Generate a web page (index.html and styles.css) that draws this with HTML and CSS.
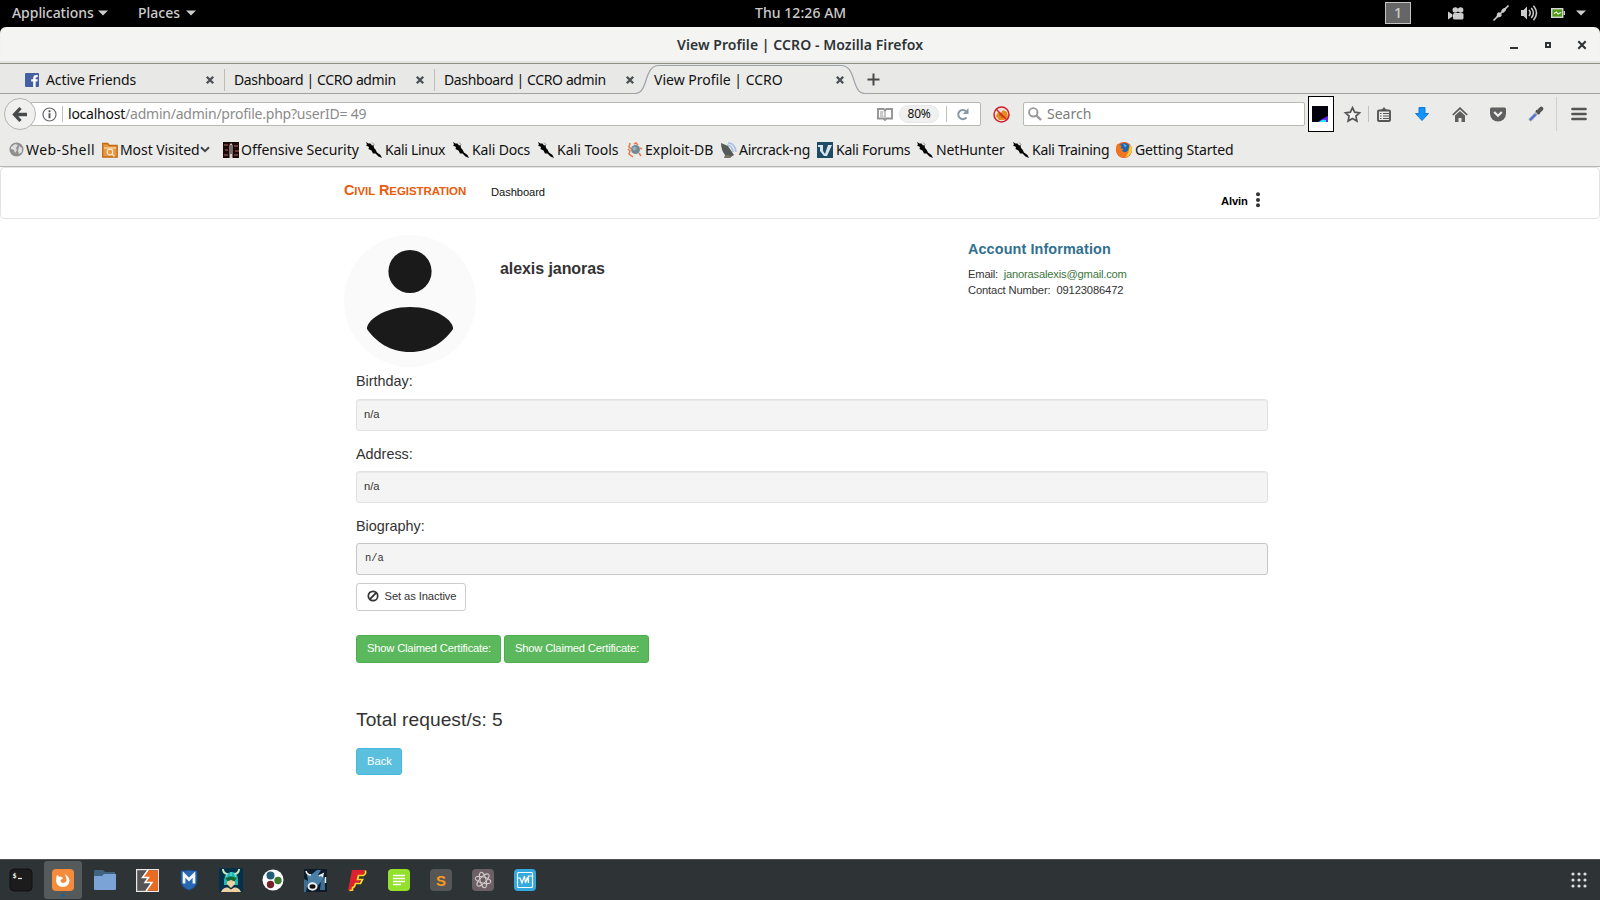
FILE: index.html
```html
<!DOCTYPE html>
<html lang="en">
<head>
<meta charset="utf-8">
<title>View Profile | CCRO</title>
<link rel="stylesheet" href="styles.css">
</head>
<body>
<svg class="defs" width="0" height="0">
  <symbol id="dragon" viewBox="0 0 16 16"><path d="M0 0l2.500 1.500 2 0 1.500 2 1.500-.5.5 3 1.500 1.500 1.500 3 3.500 2.500 1.500 3-3.500-1.500-3-3-2.500 0-1.500-3-3-1.500.5-2-3-1.500 1-1z" fill="#050505"/><path d="M6 .5l2.500 2.500" stroke="#555" stroke-width=".6"/></symbol>
  <symbol id="x" viewBox="0 0 10 10"><path d="M1.8 1.8l6.4 6.4M8.2 1.8l-6.4 6.4" stroke="#4a5053" stroke-width="2.3"/></symbol>
  <symbol id="down" viewBox="0 0 10 6"><path d="M0 .5h10l-5 5z" fill="#ccc"/></symbol>
</svg>

<header class="panel">
  <span class="menu apps">Applications</span><svg width="10" height="6"><use href="#down"/></svg>
  <span class="menu places">Places</span><svg width="10" height="6"><use href="#down"/></svg>
  <span class="clock">Thu 12:26 AM</span>
  <span class="workspace">1</span>
  <div class="tray">
    <svg width="16" height="13" viewBox="0 0 16 13"><g fill="#ccc"><circle cx="7.3" cy="3" r="2.8"/><circle cx="12.6" cy="3" r="2.8"/><rect x="5" y="6" width="10.5" height="6.5" rx="1.5"/><path d="M0 4.5l4.5 3v2L0 12.5z"/></g></svg>
    <svg width="16" height="16" viewBox="0 0 16 16"><path d="M.5 15.500L15.500.5" stroke="#ccc" stroke-width="1.700"/><path d="M3.500 12.500l.5-4 2-1.500 3 3-1.500 2zM8 6l2-2.500 3.500-1-1 3.500-2.500 2z" fill="#ccc"/></svg>
    <svg width="17" height="16" viewBox="0 0 17 16"><path d="M0 5h2.500l3.500-3.500v13L2.500 11H0z" fill="#ccc"/><path d="M8 5q2.500 3 0 6M10.300 3q4.200 5 0 10M12.500.8q6 7.200 0 14.400" fill="none" stroke="#ccc" stroke-width="1.500"/></svg>
    <svg class="battery" width="14" height="10" viewBox="0 0 14 10"><rect x=".7" y=".7" width="11" height="8.600" fill="#4f9a18" stroke="#d5d5d5" stroke-width="1.400"/><path d="M12.500 3v4h1.500v-4z" fill="#ccc"/><path d="M3 5.500l2.500-1.500 1.500 2 3-1.500" stroke="#e8f5dc" fill="none" stroke-width="1.200"/></svg>
    <svg width="10" height="6"><use href="#down"/></svg>
  </div>
</header>

<div class="titlebar">
  <span class="win-title">View Profile | CCRO - Mozilla Firefox</span>
  <div class="controls">
    <svg width="10" height="10"><path d="M1 8h8" stroke="#2e3436" stroke-width="2"/></svg>
    <svg width="8" height="8"><rect x="2" y="2" width="4" height="4" fill="none" stroke="#2e3436" stroke-width="2"/></svg>
    <svg width="10" height="10"><path d="M1.300 1.300l7.400 7.400M8.700 1.300l-7.400 7.400" stroke="#2e3436" stroke-width="2.100"/></svg>
  </div>
</div>

<div class="tabs">
  <div class="tab first">
    <svg class="fav" width="14" height="14"><rect width="14" height="14" rx="1" fill="#4460a0"/><path d="M8.200 14V8.500H6.200V6.300h2V5q0-3 3-3h1.500v2.200h-1.200q-.9 0-.9 1v1.100h2.100l-.3 2.200h-1.800V14z" fill="#fff"/></svg>
    <span>Active Friends</span><svg width="10" height="10"><use href="#x"/></svg>
  </div>
  <div class="tab dashboard"><span>Dashboard | CCRO admin</span><svg width="10" height="10"><use href="#x"/></svg></div>
  <div class="tab dashboard last"><span>Dashboard | CCRO admin</span><svg width="10" height="10"><use href="#x"/></svg></div>
  <div class="tab active">
    <svg class="tab-shape" width="236" height="31" viewBox="0 0 236 31"><path d="M0 29.500C14 29.500 8 1.500 24 1.500H206C222 1.500 216 29.500 230 29.500H236V31H0z" fill="#ebebe9"/><path d="M0 29.500C14 29.500 8 1.500 24 1.500H206C222 1.500 216 29.500 230 29.500H236" fill="none" stroke="#9da3a8" stroke-width="1.200"/></svg>
    <span>View Profile | CCRO</span><svg width="10" height="10"><use href="#x"/></svg>
  </div>
  <svg class="plus" width="13" height="13"><path d="M6.500.5v12M.5 6.500h12" stroke="#484848" stroke-width="2"/></svg>
</div>

<div class="nav">
  <div class="back"><svg width="14" height="15" viewBox="0 0 14 15"><path d="M7.500 1L1.500 7.500l6 6.500M2 7.500h12" fill="none" stroke="#484b4c" stroke-width="3.300"/></svg></div>
  <div class="url">
    <svg width="15" height="15"><circle cx="7.500" cy="7.500" r="6.500" fill="none" stroke="#666" stroke-width="1.200"/><path d="M7.500 6.300v5M7.500 3.300v2" stroke="#555" stroke-width="1.900"/></svg>
    <i class="bar"></i>
    <span class="address">localhost<em>/admin/admin/profile.php?userID= 49</em></span>
    <svg class="reader" width="16" height="13" viewBox="0 0 16 13"><path d="M1 1h5.500L8 2.300 9.500 1H15v9.500H9.500L8 12l-1.500-1.500H1z" fill="none" stroke="#949494" stroke-width="1.900"/><path d="M8 2v10M3 4h3.500M3 6h3M3 8h3.500" stroke="#949494" stroke-width="1.100"/></svg>
    <span class="zoom">80%</span>
    <i class="bar"></i>
    <svg class="reload" width="12" height="13" viewBox="0 0 12 13"><path d="M9.500 9.300A4.600 4.600 0 1 1 9 3.200" fill="none" stroke="#8898a6" stroke-width="2"/><path d="M11.500 0v6H5.800z" fill="#8898a6"/></svg>
  </div>
  <svg class="noscript" width="17" height="17" viewBox="0 0 17 17"><circle cx="8.500" cy="8.500" r="7.500" fill="#eee6dc"/><path d="M3 10l2-4 3 1 2-3 4 2 1 5-4 3-5 0z" fill="#e88a1d"/><path d="M6 9h3v3" stroke="#8d4a09" fill="none"/><circle cx="8.500" cy="8.500" r="7.500" fill="none" stroke="#d3202a" stroke-width="1.500"/><path d="M3 3l11 11" stroke="#d3202a" stroke-width="1.400"/></svg>
  <div class="search"><svg width="14" height="14"><circle cx="5.300" cy="5.300" r="4.200" fill="none" stroke="#999" stroke-width="1.900"/><path d="M8.300 8.300l4.700 4.700" stroke="#999" stroke-width="2.400"/></svg><span>Search</span></div>
  <div class="persona"><svg width="16" height="16"><rect width="16" height="16" fill="#03020d"/><path d="M16 10v6H6l4-3z" fill="#6527ef"/><path d="M7 16q3-3 7-2v2z" fill="#20edf1"/></svg></div>
  <div class="tools">
    <svg class="star" width="17" height="17" viewBox="0 0 17 17"><path d="M8.500 1.700l2.100 4.500 4.900.6-3.600 3.300 1 4.900-4.400-2.500L4.100 15l1-4.900L1.500 6.800l4.900-.6z" fill="#f6f6f6" stroke="#555" stroke-width="1.700"/></svg>
    <i class="bar"></i>
    <svg width="14" height="15" viewBox="0 0 14 15"><rect x="1" y="3.500" width="12" height="10.500" rx="1" fill="none" stroke="#555" stroke-width="1.900"/><path d="M3.500 3l2-1 1.500-2 1.500 2 2 1z" fill="#555"/><path d="M3 6.500h1.500M6 6.500h6M3 9h1.500M6 9h6M3 11.500h1.500M6 11.500h6" stroke="#555" stroke-width="1.200"/></svg>
    <svg width="14" height="14" viewBox="0 0 14 14"><path d="M4 .5h6v6h3.500L7 13.500.5 6.500H4z" fill="#1693fb" stroke="#1278d4"/></svg>
    <svg width="16" height="15" viewBox="0 0 16 15"><path d="M.8 8L8 1.200 15.200 8" fill="none" stroke="#555" stroke-width="1.700"/><path d="M3 8.500L8 4l5 4.500V15H9.500v-4h-3v4H3z" fill="#606060"/></svg>
    <svg width="16" height="15" viewBox="0 0 16 15"><path d="M1.500.5h13q1.500 0 1.500 1.500v4.500a8 8 0 0 1-16 0V2Q0 .5 1.500.5z" fill="#5f5f5f"/><path d="M4.200 5l3.800 3.700L11.800 5" fill="none" stroke="#eee" stroke-width="2.200"/></svg>
    <svg width="16" height="16" viewBox="0 0 16 16"><path d="M1.500 14.500L9.500 6.500" stroke="#a3a9b0" stroke-width="3.300"/><path d="M2 14L7.500 8.500" stroke="#4a6be0" stroke-width="1.800"/><path d="M8 4.500L11.500 8" stroke="#444" stroke-width="1.800"/><path d="M11 5L13.300 2.700" stroke="#555" stroke-width="4.200" stroke-linecap="round"/></svg>
    <i class="bar tall"></i>
    <svg width="16" height="14"><path d="M1.500 2h13M1.500 7h13M1.500 12h13" stroke="#555" stroke-width="2.700" stroke-linecap="round"/></svg>
  </div>
</div>

<div class="bookmarks">
  <a class="wide"><svg width="15" height="15" viewBox="0 0 15 15"><circle cx="7.500" cy="7.500" r="7" fill="#8f8f8f"/><path d="M2 5l4-3 3 1-2 3 1 2-2 3-1-3-3-1zM10 4l3 2v4l-3 2-1-3z" fill="#dedede"/></svg><span>Web-Shell</span></a>
  <a><svg width="16" height="16" viewBox="0 0 16 16"><path d="M.7 15V1.500h5l1.500 2h8v11.500z" fill="#e69743" stroke="#c46a12" stroke-width="1.300"/><path d="M2 6h12" stroke="#ffe9cf"/><circle cx="8" cy="10" r="2.800" fill="none" stroke="#ffe9cf" stroke-width="1.200"/><path d="M10 12l2.500 2.500" stroke="#ffe9cf" stroke-width="1.300"/></svg><span class="mv">Most Visited</span><svg class="chev" width="10" height="7"><path d="M1 1.200l4 4 4-4" fill="none" stroke="#444" stroke-width="2"/></svg></a>
  <a><svg width="16" height="16"><rect width="16" height="16" fill="#1c0808"/><path d="M1 3h4M2 8h3M1 13h4M11 4h4M12 9h4M11 13h4" stroke="#673a35" stroke-width="2"/><path d="M6.500 3l1.500-2 1.500 2v13h-3z" fill="#d8d2cf"/><path d="M8 3v9" stroke="#111" stroke-width="1"/></svg><span class="offsec">Offensive Security</span></a>
  <a class="tight"><svg width="16" height="16"><use href="#dragon"/></svg><span>Kali Linux</span></a>
  <a class="snug"><svg width="16" height="16"><use href="#dragon"/></svg><span>Kali Docs</span></a>
  <a><svg width="16" height="16"><use href="#dragon"/></svg><span>Kali Tools</span></a>
  <a><svg width="16" height="16"><path d="M3 1l-1 4 2 2M7 2l2-1 2 2M1 7l2 2-1 3 4 3M13 6l2 1M12 11l2 3" fill="none" stroke="#ec7744" stroke-width="1.500"/><circle cx="8.500" cy="7.500" r="4.500" fill="#718997"/><circle cx="7.500" cy="6.500" r="2" fill="#9aafb9"/></svg><span>Exploit-DB</span></a>
  <a class="tight"><svg width="16" height="16"><path d="M0 1l7 3 6 9-3 2-6-2Q0 8 0 1z" fill="#555b58"/><path d="M4 13l-1 3h7l-2-3z" fill="#777261"/><path d="M6 3q5 0 6 7M7 1q7 0 8 9" fill="none" stroke="#a9bfe8" stroke-width="1.700"/></svg><span>Aircrack-ng</span></a>
  <a class="tight"><svg width="16" height="16"><rect width="16" height="16" fill="#204b67"/><path d="M1 3h5v6l2 3 3-9h4l-5 11H7L3 9V5H1z" fill="#d9e4ea"/></svg><span>Kali Forums</span></a>
  <a class="snug"><svg width="16" height="16"><use href="#dragon"/></svg><span>NetHunter</span></a>
  <a class="tight"><svg width="16" height="16"><use href="#dragon"/></svg><span>Kali Training</span></a>
  <a class="snug"><svg width="16" height="16" viewBox="0 0 16 16"><circle cx="8" cy="8" r="8" fill="#e8591c"/><circle cx="8.500" cy="6.500" r="5.500" fill="#1b66ad"/><path d="M7 1.500l4 2-2 2z" fill="#58b4de"/><path d="M0 7Q0 3 2 1.500l1.500 2h2.500L4.500 6l3 1-1.500 2q3 2.500 6-.5l1.500-5q3 4 1 8-3 4.500-7.500 4Q1 14 0 7z" fill="#f0761f"/><path d="M13.500 2.500q3.500 4.500 1.700 8-2 4-6.200 5 5-5 4.500-13z" fill="#ffd23c"/></svg><span>Getting Started</span></a>
</div>

<main class="page">
  <nav class="site-nav">
    <div class="container">
      <a class="brand">C<small>ivil</small> R<small>egistration</small></a>
      <a class="dash">Dashboard</a>
      <a class="user">Alvin</a>
      <svg class="dots" width="4" height="16"><g fill="#333"><circle cx="2" cy="2.200" r="2"/><circle cx="2" cy="8" r="2"/><circle cx="2" cy="13.300" r="2"/></g></svg>
    </div>
  </nav>
  <section class="profile">
    <svg class="avatar" width="132" height="132" viewBox="0 0 132 132"><circle cx="66" cy="66" r="66" fill="#fafafa"/><circle cx="66" cy="36.500" r="21.600" fill="#1a1a1a"/><path d="M23 94C22 86 40 72 66 72S110 86 109 94C100 107 86 117 66 117S32 107 23 94z" fill="#1a1a1a"/></svg>
    <h3 class="name">alexis janoras</h3>
    <div class="account">
      <h4>Account Information</h4>
      <p class="email">Email:&nbsp; <a>janorasalexis@gmail.com</a></p>
      <p>Contact Number:&nbsp; 09123086472</p>
    </div>
  </section>
  <section class="details">
    <h4>Birthday:</h4><div class="well">n/a</div>
    <h4>Address:</h4><div class="well">n/a</div>
    <h4>Biography:</h4><pre class="well bio">n/a</pre>
    <button class="btn inactive"><svg width="12" height="12"><circle cx="6" cy="6" r="4.700" fill="none" stroke="#333" stroke-width="1.700"/><path d="M2.700 9.300l6.600-6.600" stroke="#333" stroke-width="1.900"/></svg>Set as Inactive</button>
    <div class="claims"><button class="btn success">Show Claimed Certificate:</button><button class="btn success">Show Claimed Certificate:</button></div>
    <h3>Total request/s: 5</h3>
    <button class="btn info">Back</button>
  </section>
</main>

<footer class="dock">
  <div><svg width="22" height="22"><rect width="22" height="22" rx="4" fill="#1c1c1c" stroke="#111"/><text x="2.500" y="9" class="term">$</text><path d="M8 9.500h4" stroke="#eee" stroke-width="1.200"/></svg></div>
  <div class="on"><svg width="22" height="22"><rect width="22" height="22" rx="4" fill="#f68b3c"/><path d="M4.500 7l1-1 1.500 1.500 3 .5 1 1.500-2.500 1.500q0 3 3 3 3.500-.5 3-4-.5-3-2-5 5 2.500 5 7-.5 5.500-6.500 6-6.500-.5-7-6z" fill="#fff"/></svg><i></i></div>
  <div><svg width="24" height="22"><path d="M1 2q0-1 1-1h8l2 2h10v6H1z" fill="#40647f"/><path d="M1 7h8l2-2h12v15q0 1-1 1H2q-1 0-1-1z" fill="#7ba3d5"/></svg></div>
  <div><svg width="23" height="23"><rect x=".6" y=".6" width="21.800" height="21.800" fill="#555" stroke="#e8e8e8" stroke-width="1.200"/><path d="M12 1.200h9.800v20.600H10l6-8h-6.500l3-4.800H6.500z" fill="#ea6a20"/><path d="M12 1L6.500 8.500h6l-3.500 5h7L10 22" fill="none" stroke="#fff" stroke-width="1.500"/></svg></div>
  <div><svg width="18" height="22" viewBox="0 0 20 24"><path d="M1 2q5 0 9-1 4 1 9 1v11q0 7-9 10.500Q1 20 1 13z" fill="#2868b3" stroke="#174580"/><path d="M4.500 16V6l5.500 5.500L15.500 6v10" fill="none" stroke="#f2f6fa" stroke-width="3"/></svg></div>
  <div><svg width="24" height="24"><rect width="24" height="24" fill="#062f49"/><path d="M5 17Q4 5 12 4t7 13z" fill="#23b5b0"/><path d="M4 1q0 4 4 5M20 1q0 4-4 5" fill="none" stroke="#c7e8ba" stroke-width="2"/><path d="M8 9h8v7l-4 4-4-4zM2 24q2-5 7-4.500l3 2 3-2q5-.5 7 4.500z" fill="#efd0a2"/><path d="M6.500 10q5.500-3 11 0l-2 3.500-3.500-1.500-3.500 1.500z" fill="#126a32"/><path d="M9 5l-2 4M12 4v4M15 5l2 4" stroke="#6be8df" stroke-width="1"/></svg></div>
  <div><svg width="22" height="22"><circle cx="11" cy="11" r="10.500" fill="#fff"/><circle cx="8.500" cy="6.500" r="4" fill="#235d79"/><circle cx="16" cy="11.500" r="3.700" fill="#397a2f"/><circle cx="8.500" cy="15.500" r="3.700" fill="#76202c"/></svg></div>
  <div><svg width="23" height="23"><rect width="23" height="23" fill="#101b29"/><path d="M3 6l5-1 5-4 4 0-3 5 5-1 1 4-4 5-4 5-6 2-3-5 1-5z" fill="#4a80a6"/><path d="M0 10l4 2-2 11H0zM17 12l4-3v12h-5z" fill="#3d6f95"/><path d="M2 2q1 4 5 4M15 7l4-2-1 3" fill="none" stroke="#eee" stroke-width="1.500"/><ellipse cx="8.500" cy="17.500" rx="4" ry="3.200" fill="#111" stroke="#eee" stroke-width="2"/><path d="M21.500 8v6" stroke="#eee" stroke-width="1.500"/></svg></div>
  <div><svg width="20" height="24"><path d="M5 2h13l-1.500 5-5 1.500-1 3 3 0-2 4-4 1-2 5-4.500 1z" fill="#df202e"/><path d="M18.500 2.500v3l-2 2h-5l-1 4h5l-2 4h-5l-1 3-2 1.500v2l-3 .5" fill="none" stroke="#fddb28" stroke-width="1.700"/></svg></div>
  <div><svg width="22" height="22"><rect width="22" height="22" rx="4" fill="#93e12c"/><path d="M5 6.500h12M5 9.500h12M5 12.500h12M5 15.500h8" stroke="#fff" stroke-width="1.300"/></svg></div>
  <div><svg width="22" height="22"><rect width="22" height="22" rx="4" fill="#565656"/><text x="6" y="16.500" class="sublime">S</text></svg></div>
  <div><svg width="22" height="22" viewBox="0 0 22 22"><rect width="22" height="22" rx="4" fill="#6b6063"/><g fill="none" stroke="#d2c9cb" stroke-width="1"><ellipse cx="11" cy="11" rx="8" ry="3" transform="rotate(15 11 11)"/><ellipse cx="11" cy="11" rx="8" ry="3" transform="rotate(75 11 11)"/><ellipse cx="11" cy="11" rx="8" ry="3" transform="rotate(135 11 11)"/></g></svg></div>
  <div><svg width="22" height="22"><rect width="22" height="22" rx="4" fill="#32a9df"/><rect x="3.500" y="3.500" width="15" height="15" rx="1" fill="none" stroke="#fff" stroke-width="1.200"/><path d="M4 9h2l2 5 2.500-7 1 7 2-6 1 6V7h3.500" fill="none" stroke="#fff" stroke-width="1.200"/></svg></div>
  <svg class="grid" width="16" height="16"><g fill="#dedede"><circle cx="2" cy="2" r="1.600"/><circle cx="8" cy="2" r="1.600"/><circle cx="14" cy="2" r="1.600"/><circle cx="2" cy="8" r="1.600"/><circle cx="8" cy="8" r="1.600"/><circle cx="14" cy="8" r="1.600"/><circle cx="2" cy="14" r="1.600"/><circle cx="8" cy="14" r="1.600"/><circle cx="14" cy="14" r="1.600"/></g></svg>
</footer>
</body>
</html>
```

FILE: styles.css
```css
* { box-sizing: border-box; }
body { margin: 0; width: 1600px; height: 900px; overflow: hidden; display: flex; flex-direction: column; background: #000; font: 14px/18px "Noto Sans", sans-serif; color: #111; white-space: nowrap; }
svg { display: block; flex: none; overflow: visible; }
.defs { position: absolute; }
i { display: block; flex: none; }

.panel { height: 27px; flex: none; display: flex; align-items: center; background: #000; color: #ccc; padding: 0 0 1px 12px; font-weight: 500; }
.menu { padding-bottom: 1px; }
.menu.apps { width: 86px; letter-spacing: -.05px; }
.menu.places { width: 48px; margin-left: 30px; }
.clock { margin-left: 559px; width: 630px; letter-spacing: .06px; padding-bottom: 1px; }
.workspace { width: 26px; height: 22px; border: 1px solid #c4c4c4; background: #666; text-align: center; font-size: 15px; line-height: 19px; }
.tray { display: grid; grid-template-columns: 45px 28px 30px 25px 10px; align-items: center; margin-left: 37px; }

.titlebar { height: 37px; flex: none; display: flex; align-items: center; background: #f4f4f3; border-bottom: 1px solid #8f8f88; border-radius: 6px 6px 0 0; font-weight: 600; color: #2e3436; box-shadow: inset 0 -2px 1px #e2e2df; }
.win-title { width: 832px; margin-left: 677px; font-size: 14px; letter-spacing: .07px; }
.controls { display: grid; grid-template-columns: 35px 33px 10px; align-items: center; margin-top: -1px; }

.tabs { height: 30px; flex: none; display: flex; background: #e8e8e6; border-bottom: 1px solid #a3a39d; }
.tab { width: 210px; height: 22px; margin-top: 5px; padding: 0 9px; display: flex; align-items: center; justify-content: space-between; border-right: 1px solid #bdbdb9; }
.tab.first { width: 225px; padding-left: 25px; }
.tab .fav { margin-right: 7px; }
.tab.first span { flex: 1; letter-spacing: -.1px; }
.dashboard span { letter-spacing: -.37px; }
.tab.last { border: 0; padding-right: 10px; }
.tab.active { position: relative; border: 0; padding-right: 10px; }
.tab.active span, .tab.active > svg:last-child { position: relative; }
.tab-shape { position: absolute; left: -10px; top: -5px; }
.plus { margin: 9px 0 0 12px; z-index: 1; }

.nav { height: 40px; flex: none; display: flex; align-items: center; background: #ebebe9; padding-left: 4px; }
.back { width: 32px; height: 32px; border: 1px solid #b4b4ae; border-radius: 50%; background: #f0f0ee; display: grid; place-items: center; z-index: 1; }
.url { width: 950px; height: 24px; margin-left: -5px; padding-left: 10px; display: flex; align-items: center; background: #fff; border: 1px solid #b9b9b2; border-radius: 0 2px 2px 0; }
.bar { width: 1px; height: 16px; background: #c0c0bc; }
.url > .bar:nth-of-type(1) { margin: 0 5px 0 5px; }
.address { width: 809px; letter-spacing: -.23px; }
.address em { font-style: normal; color: #8b8b8b; }
.zoom { width: 40px; height: 18px; margin: 0 8px 0 6px; border-radius: 9px; background: #f0f0f0; border: 1px solid #e8e8e8; text-align: center; font-size: 12px; line-height: 16px; letter-spacing: -.3px; }
.reload { margin-left: 10px; }
.url > .bar:nth-of-type(2) { margin-left: -1px; }
.noscript { margin-left: 12px; }
.search { width: 282px; height: 24px; margin-left: 13px; padding-left: 4px; display: flex; align-items: center; gap: 5px; border: 1px solid #b9b9b2; border-radius: 2px; background: #fff; color: #7c7c7c; }
.persona { width: 26px; height: 36px; margin-left: 3px; padding-right: 2px; border: 1px solid #000; background: #fff; display: grid; place-items: center; }
.tools { display: grid; grid-template-columns: 34px 1px 30px 45px 32px 44px 32px 9px 36px; justify-items: center; align-items: center; }
.star { margin-left: 3px; }
.bar.tall { height: 34px; background: #d0d0cc; }

.bookmarks { height: 33px; flex: none; display: grid; grid-template-columns: 93px 121px 143px 87px 85px 89px 94px 96px 100px 96px 103px 130px; align-items: center; background: #ebebe9; border-bottom: 1px solid #b6b6ae; padding: 0 0 1px 9px; }
.bookmarks a { display: flex; align-items: center; gap: 2px; }
.wide { letter-spacing: .42px; }
.mv { letter-spacing: -.08px; }
.bookmarks .chev { margin-left: -2px; }
.offsec { letter-spacing: -.05px; }
.tight { letter-spacing: -.28px; }
.bookmarks a:nth-child(n+4) { gap: 3px; }
.bookmarks a:nth-child(7), .bookmarks a:nth-child(8) { gap: 2px; }
.snug { letter-spacing: -.15px; }

.page { height: 692px; flex: none; background: #fff; font: 11.2px/16px "Liberation Sans", Arial, sans-serif; color: #333; }
.site-nav { height: 52px; border: 1px solid #e3e3e3; border-radius: 4px; }
.container { display: flex; align-items: flex-start; padding-left: 343px; color: #111; }
.brand { width: 147px; margin-top: 14px; font-size: 14.4px; font-weight: bold; letter-spacing: -.08px; color: #ea5b0c; }
.brand small { font-size: 11.5px; text-transform: uppercase; }
.dash { width: 730px; margin-top: 16px; letter-spacing: -.08px; }
.user { width: 35px; margin-top: 25px; font-weight: bold; color: #000; letter-spacing: -.1px; }
.dots { margin-top: 24px; }
.profile { height: 149px; display: flex; padding: 16px 0 0 344px; }
.name { width: 468px; margin: 24px 0 0 24px; font-size: 16px; line-height: 20px; letter-spacing: -.07px; }
.account h4 { margin: 5px 0 8px; font-size: 14.4px; line-height: 18px; font-weight: bold; color: #31708f; letter-spacing: .11px; }
.account p { margin: 0; letter-spacing: -.14px; }
.account .email { letter-spacing: -.2px; }
.account a { color: #3c763d; }
.details { padding: 4px 0 0 356px; width: 1268px; }
.details h4 { margin: 0 0 8px; font-size: 14.4px; line-height: 18px; font-weight: normal; }
.details h4:first-child { margin-bottom: 9px; }
.well { height: 32px; margin: 0 0 14px; padding: 6px 7px; background: #f4f4f4; border: 1px solid #e2e2e2; border-radius: 3px; box-shadow: inset 0 1px 1px rgba(0,0,0,.05); }
.bio { margin-bottom: 8px; padding: 6px 8px; border-color: #c7c7c7; box-shadow: none; font: 10.4px/16px "Liberation Mono", monospace; }
.btn { height: 28px; display: flex; align-items: center; justify-content: center; padding: 0 0 2px 1px; border: 1px solid #ccc; border-radius: 3px; font: 11.2px/16px "Liberation Sans", Arial, sans-serif; }
.inactive { width: 110px; gap: 6px; background: #fff; color: #333; letter-spacing: -.1px; }
.claims { display: flex; gap: 3px; margin-top: 24px; }
.success { width: 145px; background: #5cb85c; border-color: #4cae4c; color: #fff; letter-spacing: -.19px; }
.details h3 { margin: 45px 0 16px; font-size: 19.2px; line-height: 24px; font-weight: normal; letter-spacing: .04px; }
.info { width: 46px; height: 27px; background: #5bc0de; border-color: #46b8da; color: #fff; }

.dock { height: 41px; flex: none; display: flex; align-items: center; background: #2e3436; border-top: 1px solid #4c5350; }
.dock div { width: 42px; height: 38px; display: grid; place-items: center; }
.dock .on { position: relative; width: 38px; margin: 0 2px; background: #555b5b; border-radius: 3px; }
.on i { position: absolute; left: 17px; bottom: 2px; width: 4px; height: 3px; border-radius: 50%; background: #215d9c; }
.grid { margin-left: 1025px; }
.term { font: bold 7px "DejaVu Sans Mono", monospace; fill: #eee; }
.sublime { font: bold 15px "Liberation Sans", sans-serif; fill: #f99b1c; }
```
